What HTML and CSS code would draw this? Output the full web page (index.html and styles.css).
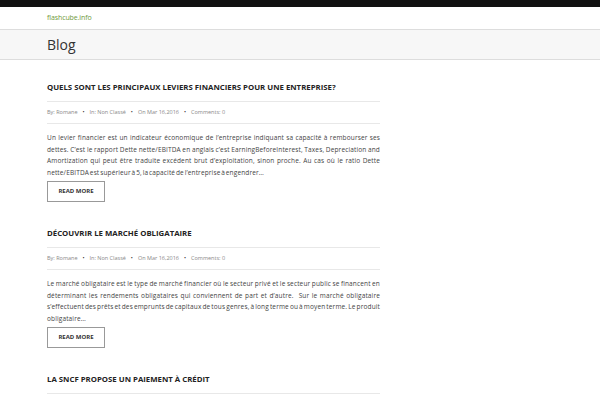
FILE: index.html
```html
<!DOCTYPE html>
<html lang="fr">
<head>
<meta charset="utf-8">
<title>Blog</title>
<link rel="stylesheet" href="styles.css">
</head>
<body>
<div class="topbar"></div>
<header class="site-header">
  <div class="wrap"><a class="site-name" href="#">flashcube.info</a></div>
</header>
<div class="page-title">
  <div class="wrap"><h1>Blog</h1></div>
</div>
<main class="wrap content">
  <article class="post">
    <h2 class="post-title">QUELS SONT LES PRINCIPAUX LEVIERS FINANCIERS POUR UNE ENTREPRISE?</h2>
    <div class="meta">
      <span>By: Romane</span><span class="dot">&bull;</span><span>In: Non Classé</span><span class="dot">&bull;</span><span>On Mar 16,2016</span><span class="dot">&bull;</span><span>Comments: 0</span>
    </div>
    <p class="excerpt">Un levier financier est un indicateur économique de l’entreprise indiquant sa capacité à rembourser ses dettes. C’est le rapport Dette nette/EBITDA en anglais c’est EarningBeforeInterest, Taxes, Depreciation and Amortization qui peut être traduite excédent brut d’exploitation, sinon proche. Au cas où le ratio Dette nette/EBITDA est supérieur à 5, la capacité de l’entreprise à engendrer…</p>
    <a class="btn" href="#">READ MORE</a>
  </article>
  <article class="post">
    <h2 class="post-title">DÉCOUVRIR LE MARCHÉ OBLIGATAIRE</h2>
    <div class="meta">
      <span>By: Romane</span><span class="dot">&bull;</span><span>In: Non Classé</span><span class="dot">&bull;</span><span>On Mar 16,2016</span><span class="dot">&bull;</span><span>Comments: 0</span>
    </div>
    <p class="excerpt">Le marché obligataire est le type de marché financier où le secteur privé et le secteur public se financent en déterminant les rendements obligataires qui conviennent de part et d’autre.&nbsp; Sur le marché obligataire s’effectuent des prêts et des emprunts de capitaux de tous genres, à long terme ou à moyen terme. Le produit obligataire…</p>
    <a class="btn" href="#">READ MORE</a>
  </article>
  <article class="post">
    <h2 class="post-title">LA SNCF PROPOSE UN PAIEMENT À CRÉDIT</h2>
    <div class="meta">
      <span>By: Romane</span><span class="dot">&bull;</span><span>In: Non Classé</span><span class="dot">&bull;</span><span>On Mar 16,2016</span><span class="dot">&bull;</span><span>Comments: 0</span>
    </div>
  </article>
</main>
</body>
</html>
```
FILE: styles.css
```css
* { box-sizing: border-box; }
html, body { margin: 0; padding: 0; }
body {
  font-family: "Open Sans", "Liberation Sans", sans-serif;
  color: #333;
  background: #fff;
  overflow: hidden;
  height: 400px;
}
.wrap { padding-left: 47px; width: 380px; box-sizing: content-box; }
.wrap.content { width: 333px; }
.topbar { height: 7px; background: #111; }
.site-header {
  height: 23px;
  border-bottom: 1px solid #ddd;
  display: flex;
  align-items: center;
}
.site-name {
  font-size: 7px;
  color: #6f9a3c;
  text-decoration: none;
  letter-spacing: -0.1px;
  line-height: 1;
  display: block;
  margin-top: -2px;
}
.page-title {
  height: 30px;
  background: #f7f7f7;
  border-bottom: 1px solid #ddd;
  display: flex;
  align-items: center;
}
.page-title h1 {
  margin: 0;
  font-size: 14px;
  font-weight: 400;
  color: #333;
  line-height: 1;
}
.content { padding-top: 20px; }
.post { margin-bottom: 24px; }
.post-title {
  margin: 0;
  font-size: 7.8px;
  font-weight: 700;
  color: #222;
  line-height: 14px;
  padding-bottom: 7px;
  border-bottom: 1px solid #e8e8e8;
}
.meta {
  font-size: 5.5px;
  color: #888;
  line-height: 11px;
  padding: 5px 0 5px;
  border-bottom: 1px solid #e8e8e8;
}
.meta .dot { margin: 0 5px; color: #333; }
.excerpt {
  margin: 8px 0 2px;
  font-size: 6.5px;
  letter-spacing: 0.14px;
  word-spacing: -1px;
  line-height: 11.7px;
  text-align: justify;
  color: #444;
}
.btn {
  display: flex;
  align-items: center;
  justify-content: center;
  width: 58px;
  height: 21px;
  border: 1px solid #999;
  font-size: 6px;
  font-weight: 700;
  color: #333;
  text-decoration: none;
}
```
